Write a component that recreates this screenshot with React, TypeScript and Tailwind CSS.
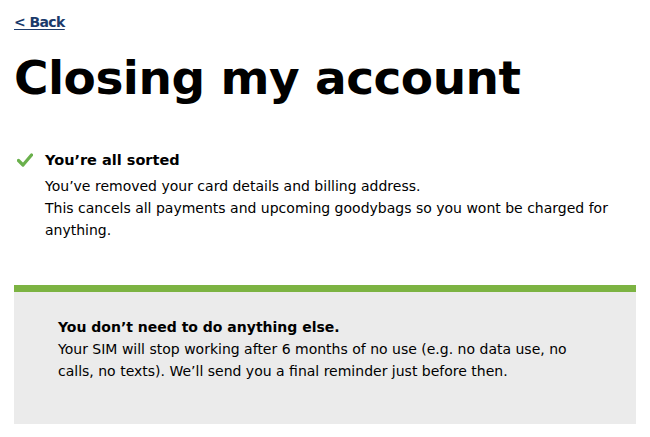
import React from "react";

const font = { fontFamily: '"DejaVu Sans", "Noto Sans", sans-serif' };

function Check() {
  return (
    <svg width="16" height="14" viewBox="0 0 16 14" className="mt-[4px] shrink-0">
      <path d="M1.5 7.5 L6 12 L14.5 2" fill="none" stroke="#6ab04c" strokeWidth="3.2" strokeLinecap="round" strokeLinejoin="round" />
    </svg>
  );
}

export default function App() {
  return (
    <div className="min-h-[437px] bg-white px-[14px] pt-[10px] text-black" style={font}>
      <a href="#" className="text-[14px] font-bold tracking-[-0.6px] text-[#1b3a6b] underline underline-offset-2">
        &lt; Back
      </a>

      <h1 className="mt-[14px] text-[47px] leading-[60px] font-extrabold tracking-[-0.5px]">Closing my account</h1>

      <div className="mt-[41px] flex gap-[12px] pl-[3px]">
        <Check />
        <div className="text-[14px] leading-[22px]">
          <div className="mb-[4px] text-[14.5px] font-bold">You’re all sorted</div>
          <p>You’ve removed your card details and billing address.</p>
          <p>This cancels all payments and upcoming goodybags so you wont be charged for anything.</p>
        </div>
      </div>

      <div className="mt-[44px] w-[622px] border-t-[7px] border-[#7cb342] bg-[#ebebeb] px-[44px] pt-[24px] pb-[42px] text-[14px] leading-[22px]">
        <div className="font-bold">You don’t need to do anything else.</div>
        <p className="max-w-[525px]">
          Your SIM will stop working after 6 months of no use (e.g. no data use, no calls, no texts). We’ll send you a final reminder just before then.
        </p>
      </div>
    </div>
  );
}
